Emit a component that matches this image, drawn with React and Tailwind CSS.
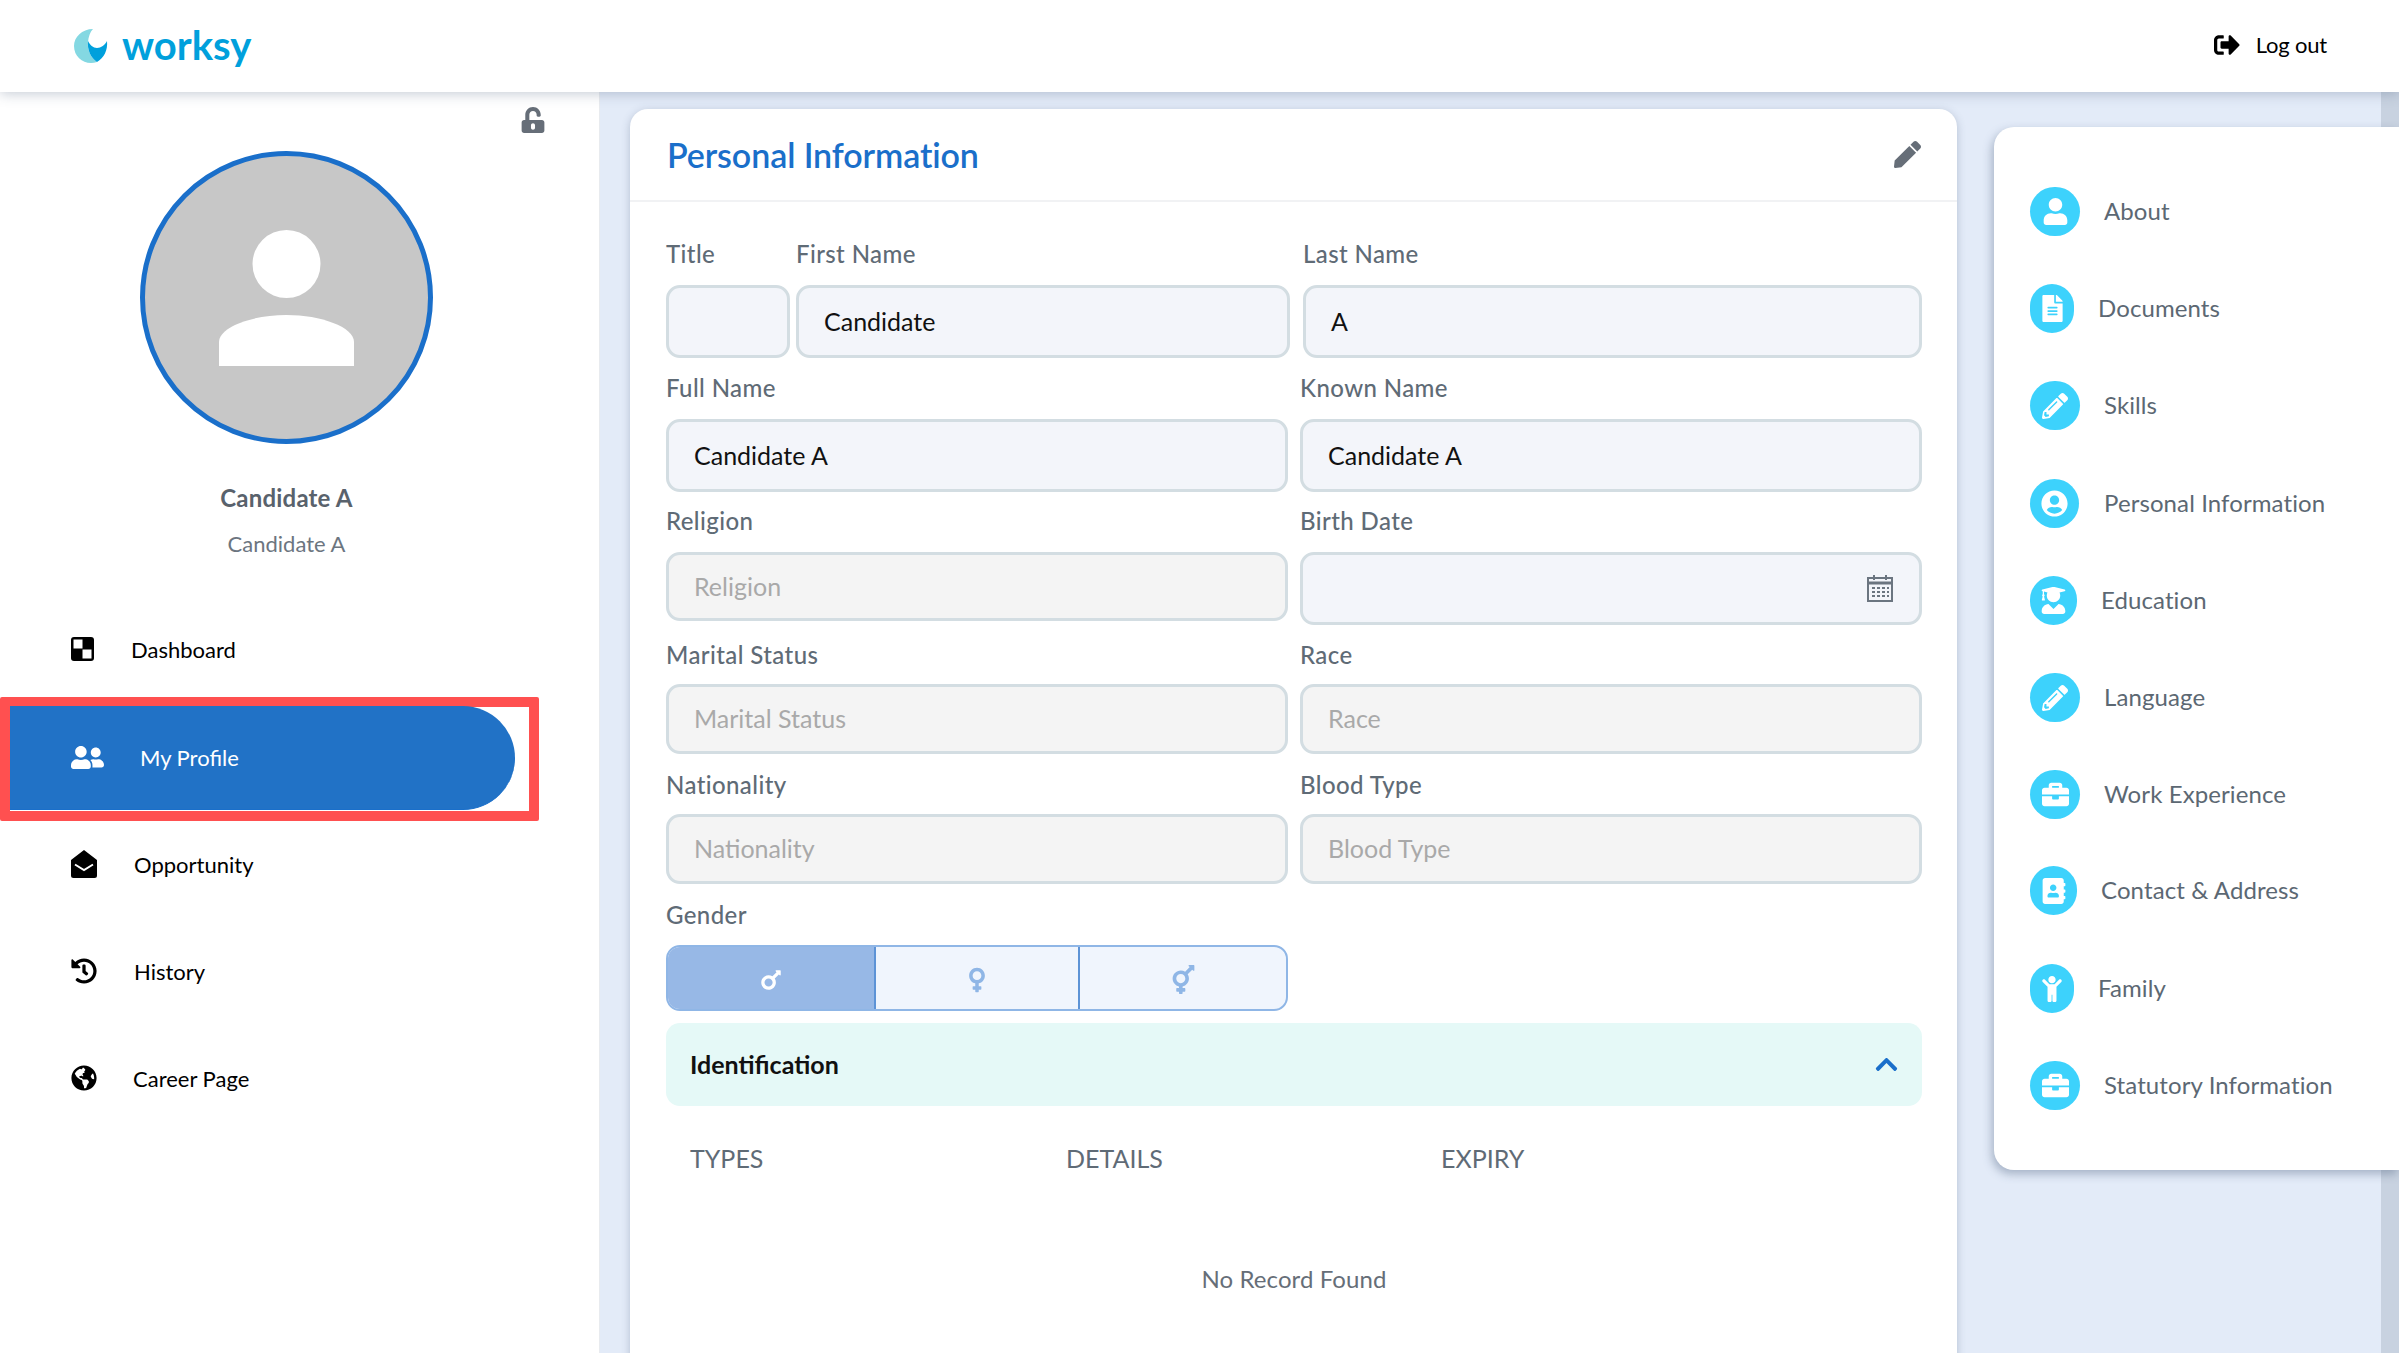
import {
  FaUnlockAlt,
  FaUserFriends,
  FaHistory,
  FaGlobeAmericas,
  FaSignOutAlt,
  FaPen,
  FaMars,
  FaVenus,
  FaTransgender,
  FaChevronUp,
  FaUser,
  FaFileAlt,
  FaPencilAlt,
  FaUserCircle,
  FaUserGraduate,
  FaBriefcase,
  FaAddressBook,
  FaChild,
} from "react-icons/fa";

const sideItems = [
  { label: "About", Icon: FaUser, w: "w-[50px]", gap: "ml-[24px]", top: "mt-[60px]", size: 27 },
  { label: "Documents", Icon: FaFileAlt, w: "w-[44px]", gap: "ml-[24px]", top: "mt-[48px]", size: 27 },
  { label: "Skills", Icon: FaPencilAlt, w: "w-[50px]", gap: "ml-[24px]", top: "mt-[48px]", size: 26 },
  { label: "Personal Information", Icon: FaUserCircle, w: "w-[49px]", gap: "ml-[25px]", top: "mt-[49px]", size: 27 },
  { label: "Education", Icon: FaUserGraduate, w: "w-[47px]", gap: "ml-[24px]", top: "mt-[48px]", size: 27 },
  { label: "Language", Icon: FaPencilAlt, w: "w-[50px]", gap: "ml-[24px]", top: "mt-[48px]", size: 26 },
  { label: "Work Experience", Icon: FaBriefcase, w: "w-[50px]", gap: "ml-[24px]", top: "mt-[48px]", size: 27 },
  { label: "Contact & Address", Icon: FaAddressBook, w: "w-[47px]", gap: "ml-[24px]", top: "mt-[47px]", size: 26 },
  { label: "Family", Icon: FaChild, w: "w-[44px]", gap: "ml-[24px]", top: "mt-[49px]", size: 26 },
  { label: "Statutory Information", Icon: FaBriefcase, w: "w-[50px]", gap: "ml-[24px]", top: "mt-[48px]", size: 27 },
];

function Logo() {
  return (
    <svg width="34" height="34" viewBox="0 0 34 34">
      <path
        d="M19 0C8 0 0 8 0 17c0 10 8 17 17 17 2 0 4-.5 6-1-6-4-10-12-9-20 .5-5 2-10 5-13Z"
        fill="#84d8e2"
      />
      <path
        d="M14 12c2 4 5 7 9 7s8-3 10-7c1 9-3 17-10 21-6-4-10-12-9-21Z"
        fill="#00a0dc"
      />
    </svg>
  );
}

function Field({ label, value, placeholder, disabled, className, inputH, labelGap }) {
  return (
    <div className={className}>
      <div className={`h-[34px] leading-[34px] text-[24px] tracking-[0.4px] font-medium text-[#5f6b76] ${labelGap}`}>
        {label}
      </div>
      <div
        className={`flex items-center px-[25px] border-[3px] border-[#d3dde2] rounded-[14px] text-[25px] ${inputH} ${
          disabled ? "bg-[#f4f4f4] text-[#a9a9a9]" : "bg-[#f3f5fa] text-[#111111]"
        }`}
      >
        {value || placeholder}
      </div>
    </div>
  );
}

function CalendarIcon() {
  return (
    <svg width="26" height="27" viewBox="0 0 26 27" fill="none">
      <rect x="1" y="3" width="24" height="23" stroke="#6b7580" strokeWidth="2" />
      <path d="M1 8h24" stroke="#6b7580" strokeWidth="3" />
      <path d="M7 0v5M19 0v5" stroke="#6b7580" strokeWidth="2" />
      <path
        d="M5 13h3M10 13h3M15 13h3M20 13h2M5 17h3M10 17h3M15 17h3M20 17h2M5 21h3M10 21h3M15 21h3M20 21h2"
        stroke="#6b7580"
        strokeWidth="2"
      />
    </svg>
  );
}

export default function App() {
  return (
    <div className="w-[2399px] h-[1353px] overflow-hidden flex flex-col bg-[#e3ebf8] font-['Lato',sans-serif]">
      {/* header */}
      <header className="relative z-10 h-[92px] shrink-0 bg-white flex items-center justify-between shadow-[0_2px_12px_rgba(70,90,120,0.3)]">
        <div className="flex items-center pl-[74px]">
          <Logo />
          <span className="ml-[14px] text-[40px] leading-none font-bold text-[#00a0dc] -mt-[3px]">
            worksy
          </span>
        </div>
        <div className="flex items-center pr-[72px] -mt-[3px]">
          <FaSignOutAlt size={26} className="text-black" />
          <span className="ml-[16px] text-[22px] tracking-[-0.2px] text-black">Log out</span>
        </div>
      </header>

      <div className="flex flex-1 min-h-0">
        {/* left sidebar */}
        <aside className="w-[600px] shrink-0 bg-white border-r border-[#e8ebef]">
          <div className="flex justify-end pr-[53px] pt-[15px] h-[59px]">
            <FaUnlockAlt size={26} className="text-[#666e78]" />
          </div>
          <div className="ml-[140px] w-[293px] h-[293px] rounded-full border-[5px] border-[#1a6fca] bg-[#c7c7c7] flex items-center justify-center">
            <svg width="135" height="136" viewBox="0 0 135 136" fill="#ffffff">
              <circle cx="67.500" cy="34" r="34" />
              <path d="M0 136v-24c0-15 33-27 67.500-27S135 97 135 112v24Z" />
            </svg>
          </div>
          <div className="w-[573px] text-center text-[24px] font-bold tracking-[0.2px] leading-[30px] text-[#59626c] mt-[39px]">
            Candidate A
          </div>
          <div className="w-[573px] text-center text-[22px] leading-[30px] text-[#6c757f] mt-[16px]">
            Candidate A
          </div>

          <div className="mt-[67px] h-[46px] flex items-center pl-[71px] text-[22px] text-black">
            <svg width="23" height="24" viewBox="0 0 23 24">
              <rect width="23" height="24" rx="3" fill="#000000" />
              <rect x="2.500" y="2.500" width="9" height="9" fill="#ffffff" />
              <rect x="11.500" y="12.500" width="9" height="9" fill="#ffffff" />
            </svg>
            <span className="ml-[37px]">Dashboard</span>
          </div>

          <div className="mt-[25px] w-[539px] h-[124px] border-[10px] border-[#ff5050] rounded-[2px]">
            <div className="w-[505px] h-[104px] bg-[#2172c6] border-b border-[#1a6fca] rounded-r-[52px] flex items-center pl-[61px] text-[22px] text-white -mt-[1px]">
              <FaUserFriends size={33} />
              <span className="ml-[36px]">My Profile</span>
            </div>
          </div>

          <div className="mt-[20px] h-[46px] flex items-center pl-[71px] text-[22px] text-black">
            <svg width="26" height="28" viewBox="0 0 26 28">
              <path d="M13 0 26 10v15.500a2.500 2.500 0 0 1-2.500 2.500h-21A2.500 2.500 0 0 1 0 25.500V10Z" fill="#000000" />
              <path d="M4 14.500 13 20l9-5.500" fill="none" stroke="#ffffff" strokeWidth="2" />
            </svg>
            <span className="ml-[37px]">Opportunity</span>
          </div>

          <div className="mt-[61px] h-[46px] flex items-center pl-[71px] text-[22px] text-black">
            <FaHistory size={26} />
            <span className="ml-[37px]">History</span>
          </div>

          <div className="mt-[61px] h-[46px] flex items-center pl-[71px] text-[22px] text-black">
            <FaGlobeAmericas size={26} />
            <span className="ml-[36px]">Career Page</span>
          </div>
        </aside>

        {/* main card */}
        <main className="ml-[30px] mt-[17px] w-[1327px] shrink-0 bg-white rounded-t-[18px] shadow-[0_2px_8px_rgba(70,90,120,0.3)] self-start h-[1300px]">
          <div className="h-[93px] border-b-2 border-[#f1f2f4] flex items-center justify-between pl-[37px] pr-[36px]">
            <h1 className="text-[34px] font-semibold tracking-[-0.1px] text-[#1a6fca]">Personal Information</h1>
            <FaPen size={27} className="text-[#666e78]" />
          </div>

          <div className="pl-[36px] pr-[35px] pt-[35px]">
            <div className="flex">
              <Field label="Title" className="w-[124px]" inputH="h-[73px]" labelGap="mb-[14px]" />
              <Field label="First Name" value="Candidate" className="w-[494px] ml-[6px]" inputH="h-[73px]" labelGap="mb-[14px]" />
              <Field label="Last Name" value="A" className="w-[619px] ml-[13px]" inputH="h-[73px]" labelGap="mb-[14px]" />
            </div>

            <div className="flex mt-[13px]">
              <Field label="Full Name" value="Candidate A" className="w-[622px]" inputH="h-[73px]" labelGap="mb-[14px]" />
              <Field label="Known Name" value="Candidate A" className="w-[622px] ml-[12px]" inputH="h-[73px]" labelGap="mb-[14px]" />
            </div>

            <div className="flex mt-[12px]">
              <Field label="Religion" placeholder="Religion" disabled className="w-[622px]" inputH="h-[69px]" labelGap="mb-[14px]" />
              <div className="w-[622px] ml-[12px]">
                <div className="h-[34px] leading-[34px] text-[24px] tracking-[0.4px] font-medium text-[#5f6b76] mb-[14px]">Birth Date</div>
                <div className="h-[73px] flex items-center justify-end pr-[26px] border-[3px] border-[#d3dde2] rounded-[14px] bg-[#f3f5fa]">
                  <CalendarIcon />
                </div>
              </div>
            </div>

            <div className="flex mt-[13px]">
              <Field label="Marital Status" placeholder="Marital Status" disabled className="w-[622px]" inputH="h-[70px]" labelGap="mb-[12px]" />
              <Field label="Race" placeholder="Race" disabled className="w-[622px] ml-[12px]" inputH="h-[70px]" labelGap="mb-[12px]" />
            </div>

            <div className="flex mt-[14px]">
              <Field label="Nationality" placeholder="Nationality" disabled className="w-[622px]" inputH="h-[70px]" labelGap="mb-[12px]" />
              <Field label="Blood Type" placeholder="Blood Type" disabled className="w-[622px] ml-[12px]" inputH="h-[70px]" labelGap="mb-[12px]" />
            </div>

            <div className="mt-[14px] h-[34px] leading-[34px] text-[24px] tracking-[0.4px] font-medium text-[#5f6b76] mb-[13px]">Gender</div>
            <div className="w-[622px] h-[66px] flex border-2 border-[#8fb6e6] rounded-[14px] overflow-hidden bg-[#f0f5fd]">
              <div className="w-[208px] bg-[#97b8e6] border-r-2 border-[#5d93d6] flex items-center justify-center text-white pt-[4px]">
                <FaMars size={26} />
              </div>
              <div className="w-[204px] border-r-2 border-[#5d93d6] flex items-center justify-center text-[#8fb6e6] pt-[3px]">
                <FaVenus size={28} />
              </div>
              <div className="flex-1 flex items-center justify-center text-[#8fb6e6] pt-[3px]">
                <FaTransgender size={29} />
              </div>
            </div>

            <div className="mt-[12px] h-[83px] bg-[#e5f9f7] rounded-[14px] flex items-center justify-between pl-[24px] pr-[23px]">
              <span className="text-[25px] font-bold text-[#111111]">Identification</span>
              <FaChevronUp size={25} className="text-[#1a6fca]" />
            </div>

            <div className="mt-[33px] h-[40px] flex items-center pl-[24px] text-[25px] text-[#5f6b76]">
              <div className="w-[376px]">TYPES</div>
              <div className="w-[375px]">DETAILS</div>
              <div>EXPIRY</div>
            </div>

            <div className="mt-[80px] h-[40px] flex items-center justify-center text-[24px] tracking-[0.1px] text-[#666e78]">
              No Record Found
            </div>
          </div>
        </main>

        {/* right section nav, runs over the scrollbar track */}
        <div className="ml-[37px] flex-1 border-r-[18px] border-[#c8d2e0] min-w-0">
          <nav className="mt-[35px] w-[405px] h-[1043px] bg-white rounded-l-[20px] pl-[36px] flex flex-col shadow-[-2px_4px_10px_rgba(70,90,120,0.4)]">
            {sideItems.map(({ label, Icon, w, gap, top, size }) => (
              <div key={label} className={`flex items-center h-[49px] ${top}`}>
                <div className={`${w} h-[49px] rounded-full bg-[#3dd2fc] flex items-center justify-center text-white shrink-0`}>
                  <Icon size={size} />
                </div>
                <span className={`${gap} text-[24px] tracking-[0.1px] text-[#5c6873] -mt-[1px]`}>{label}</span>
              </div>
            ))}
          </nav>
        </div>
      </div>
    </div>
  );
}
